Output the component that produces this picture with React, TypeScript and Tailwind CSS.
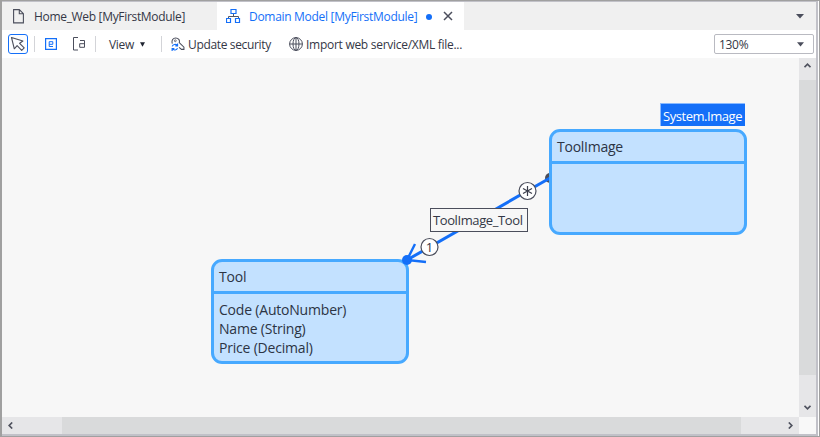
import type { ReactNode } from "react";

function Separator({ className = "" }: { className?: string }) {
  return <div className={`h-4 w-px shrink-0 bg-[#d3d4d8] ${className}`} />;
}

function ModelIcon() {
  return (
    <svg width="15" height="15" viewBox="0 0 15 15" fill="none" className="shrink-0">
      <path d="M7.5 5v3M2.5 10V7.5h10V10" stroke="#555866" />
      <path d="M5 .5h5v4H5zM.5 9.5h4v4h-4zM9.5 9.5h4v4h-4z" stroke="#146ff8" strokeWidth="1.2" />
    </svg>
  );
}

function TabBar() {
  return (
    <div className="flex h-7 bg-[#f0f0f0]">
      <div className="flex w-[215px] items-center pl-[11px]">
        <svg width="11" height="15" viewBox="0 0 11 15" fill="none" className="shrink-0">
          <path d="M.6.6h5.7l4.1 4.1v9.2H.6zM6.3.6v4.1h4.1" stroke="#4b4e5c" strokeWidth="1.1" />
        </svg>
        <span className="ml-[10px] pt-px whitespace-nowrap tracking-[-0.32px]">Home_Web [MyFirstModule]</span>
      </div>
      <div className="flex w-[247px] items-center bg-white pl-[9px]">
        <ModelIcon />
        <span className="ml-2 pt-px whitespace-nowrap text-[#146ff8] tracking-[-0.3px]">Domain Model [MyFirstModule]</span>
        <div className="mt-px ml-auto size-[6px] rounded-full bg-[#146ff8]" />
        <svg width="10" height="10" viewBox="0 0 10 10" className="mr-[11px] ml-[11px]">
          <path d="M1 1l8 8M9 1L1 9" stroke="#4b4e5c" strokeWidth="1.5" />
        </svg>
      </div>
      <div className="flex flex-1 items-center justify-end pr-3">
        <svg width="8" height="5" viewBox="0 0 8 5"><path d="M0 0h8L4 4.5z" fill="#4b4e5c" /></svg>
      </div>
    </div>
  );
}

function Toolbar() {
  return (
    <div className="flex h-7 items-center bg-white pl-[6px]">
      <div className="flex size-5 shrink-0 items-center justify-center rounded-[3px] border border-[#146ff8] bg-[#fbfdff]">
        <svg width="16" height="16" viewBox="0 0 16 16" fill="none">
          <path d="M1.5 1.5l2.8 11.3 2.8-3.1 4.6 4.6 2.5-2.4-4.6-4.6 3.3-2.3z" stroke="#4b4e5c" strokeWidth="1.1" strokeLinejoin="round" />
        </svg>
      </div>
      <Separator className="ml-[6px]" />
      <svg width="12" height="12" viewBox="0 0 12 12" fill="none" className="ml-[10px] shrink-0">
        <path d="M.6.6h10.8v10.8H.6z" stroke="#146ff8" strokeWidth="1.2" />
        <path d="M4.2 6.3h3.6V3.7H4.2v4.8H8" stroke="#146ff8" />
      </svg>
      <svg width="13" height="14" viewBox="0 0 13 14" fill="none" className="ml-4 shrink-0">
        <path d="M5 .5H.5v12.5H5" stroke="#4b4e5c" />
        <path d="M7 3.5h4.5v6.8H6.7V6.7h4.8" stroke="#4b4e5c" />
      </svg>
      <Separator className="ml-[9px]" />
      <span className="ml-[13px] pt-px tracking-[-0.3px]">View</span>
      <svg width="5" height="5" viewBox="0 0 5 5" className="ml-[6px]"><path d="M0 .3h5L2.5 4.7z" fill="#1f2430" /></svg>
      <Separator className="ml-4" />
      <svg width="15" height="15" viewBox="0 0 16 16" fill="none" className="ml-[9px] shrink-0">
        <path d="M1.4 7C.3 3.5 2.2 1 5 1c3 0 4.6 2.5 3.8 5l5 4.8v2.4h-2.6L8.6 11" stroke="#4b4e5c" strokeWidth="1.1" />
        <circle cx="4.6" cy="4" r="1" stroke="#4b4e5c" strokeWidth=".8" />
        <path d="M1.3 10c.6-2.4 4.2-2.8 5.4-.8M7 7v2.4H4.6M6.9 11.8c-.6 2.4-4.2 2.8-5.4.8M1.2 14.8v-2.4h2.4" stroke="#146ff8" strokeWidth="1.2" />
      </svg>
      <span className="ml-[2px] w-[85px] pt-px whitespace-nowrap tracking-[-0.35px]">Update security</span>
      <svg width="14" height="14" viewBox="0 0 14 14" fill="none" stroke="#4b4e5c" className="ml-[16px] shrink-0">
        <circle cx="7" cy="7" r="6.4" />
        <ellipse cx="7" cy="7" rx="3" ry="6.4" />
        <path d="M.6 7h12.8M7 .6v12.8" />
      </svg>
      <span className="ml-[3px] pt-px whitespace-nowrap tracking-[-0.28px]">Import web service/XML file...</span>
      <div className="mr-[2px] ml-auto flex h-5 w-[100px] items-center justify-between rounded-[2px] border border-[#b9bac1] pr-[9px] pl-1">
        <span className="pt-px tracking-[-0.3px]">130%</span>
        <svg width="7" height="5" viewBox="0 0 7 5"><path d="M0 .2h7L3.5 4.5z" fill="#4b4e5c" /></svg>
      </div>
    </div>
  );
}

function Entity({ name, className, children }: { name: string; className: string; children?: ReactNode }) {
  return (
    <div className={`absolute flex w-[198px] flex-col rounded-[11px] border-[3px] border-[#47a9ff] bg-[#c3e1ff] text-[14px] leading-[19px] text-[#2c3444] ${className}`}>
      <div className="flex h-8 items-center border-b-[3px] border-[#47a9ff] pl-[5px]">{name}</div>
      <div className="flex flex-col pt-[6px] pl-[5px]">{children}</div>
    </div>
  );
}

function Canvas() {
  return (
    <div className="relative flex-1 overflow-hidden bg-[#f7f7f7]">
      <svg width="797" height="359" viewBox="2 58 797 359" fill="none" className="absolute inset-0">
        <circle cx="550" cy="178" r="5" fill="#4b4e5c" />
        <path d="M407 260L550 178" stroke="#146ff8" strokeWidth="3" />
      </svg>
      <Entity name="ToolImage" className="top-[71px] left-[547px] h-[106px] tracking-[-0.25px]" />
      <Entity name="Tool" className="top-[201px] left-[209px] h-[105px] tracking-[-0.2px]">
        <span>Code (AutoNumber)</span>
        <span>Name (String)</span>
        <span>Price (Decimal)</span>
      </Entity>
      <div className="absolute top-[45px] left-[658px] flex h-[23px] w-[85px] items-center border-t border-l border-[#8abaff] bg-[#146ff8] pt-1 pl-[2px] text-[13px] tracking-[-0.45px] whitespace-nowrap text-white">
        System.Image
      </div>
      <svg width="797" height="359" viewBox="2 58 797 359" fill="none" className="absolute inset-0">
        <circle cx="407" cy="260" r="5" fill="#146ff8" />
        <path d="M415 244L407 260L426 262" stroke="#146ff8" strokeWidth="2.4" />
        <circle cx="429.5" cy="247" r="8.5" fill="white" stroke="#4b4e5c" strokeWidth="1.2" />
        <circle cx="527.5" cy="191" r="8.5" fill="white" stroke="#4b4e5c" strokeWidth="1.2" />
        <path d="M527.5 186v10M523 188.5l9 5M532 188.5l-9 5" stroke="#3b3e4c" strokeWidth="1.2" />
      </svg>
      <span className="absolute top-[179px] left-[418px] w-[19px] text-center text-[13px] leading-5">1</span>
      <div className="absolute top-[150px] left-[428px] flex h-6 w-[98px] items-center border border-[#4b4e5c] bg-[#f7f7f7] pt-px pl-[2px] text-[13px] tracking-[-0.4px] whitespace-nowrap">
        ToolImage_Tool
      </div>
    </div>
  );
}

function Chevron({ className = "" }: { className?: string }) {
  return (
    <svg width="7" height="5" viewBox="0 0 7 5" fill="none" className={className}>
      <path d="M.5 4.2l3-3 3 3" stroke="#50535f" strokeWidth="1.7" />
    </svg>
  );
}

export default function App() {
  return (
    <div className="h-[437px] w-[820px] border-t border-r border-b border-l-2 border-[#a0a0a0] bg-white pr-px font-['Open_Sans',sans-serif] text-[12px] text-[#343746]">
      <div className="flex h-full flex-col border-t border-r-2 border-b-2 border-[#c1c1c8]">
        <TabBar />
        <Toolbar />
        <div className="flex h-[359px]">
          <Canvas />
          <div className="flex w-[17px] flex-col items-center bg-[#e6e6e8]">
            <div className="flex h-[22px] items-start pt-[5px]"><Chevron /></div>
            <div className="h-[295px] w-full bg-[#d9dadb]" />
            <div className="flex flex-1 items-end pb-[7px]"><Chevron className="rotate-180" /></div>
          </div>
        </div>
        <div className="flex h-[17px]">
          <div className="flex w-[60px] items-center bg-[#e6e6e8] pl-[5px]"><Chevron className="-rotate-90" /></div>
          <div className="w-[679px] bg-[#d9dadb]" />
          <div className="flex w-[58px] items-center justify-end bg-[#e6e6e8] pr-[5px]"><Chevron className="rotate-90" /></div>
          <div className="flex-1 bg-[#f8f8f8]" />
        </div>
      </div>
    </div>
  );
}
